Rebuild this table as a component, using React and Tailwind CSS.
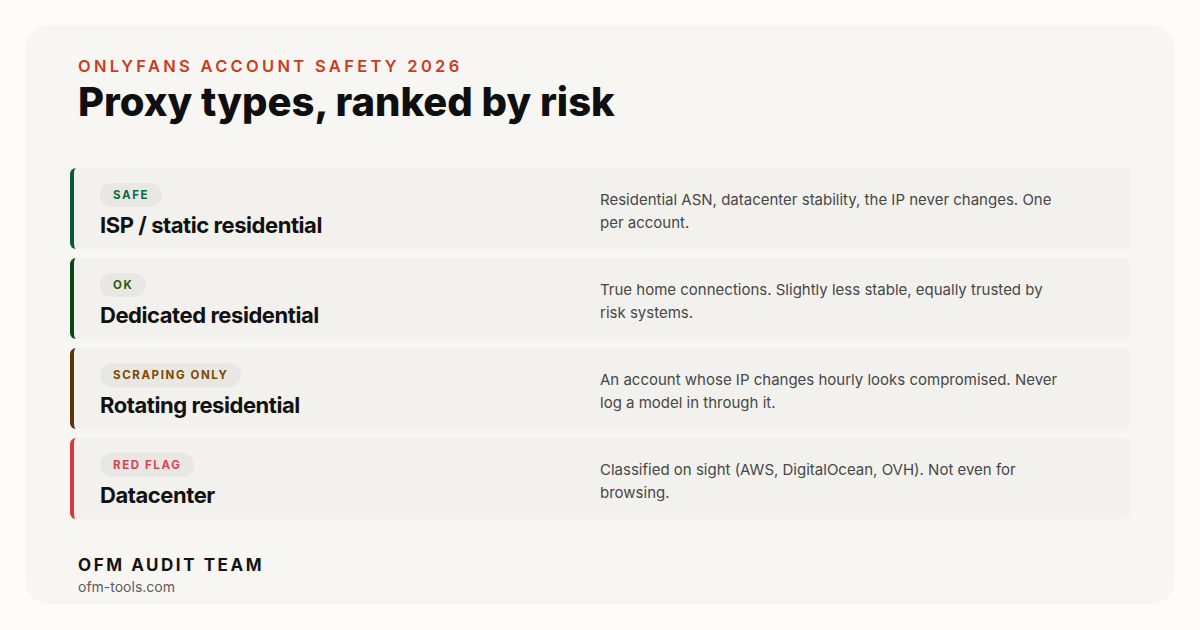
const rows = [
  {
    tag: "SAFE",
    tagColor: "text-[#0b6b42]",
    bar: "border-[#0a5a36]",
    name: "ISP / static residential",
    desc: "Residential ASN, datacenter stability, the IP never changes. One per account.",
  },
  {
    tag: "OK",
    tagColor: "text-[#2f5d0c]",
    bar: "border-[#0e4512]",
    name: "Dedicated residential",
    desc: "True home connections. Slightly less stable, equally trusted by risk systems.",
  },
  {
    tag: "SCRAPING ONLY",
    tagColor: "text-[#7a4a00]",
    bar: "border-[#5f3308]",
    name: "Rotating residential",
    desc: "An account whose IP changes hourly looks compromised. Never log a model in through it.",
  },
  {
    tag: "RED FLAG",
    tagColor: "text-[#d8454f]",
    bar: "border-[#d63843]",
    name: "Datacenter",
    desc: "Classified on sight (AWS, DigitalOcean, OVH). Not even for browsing.",
  },
]

export default function App() {
  return (
    <div
      className="w-[1200px] h-[630px] bg-[#fdfcf9] p-[25px]"
      style={{ fontFamily: "Inter, 'Noto Sans', sans-serif" }}
    >
      <div className="h-[579px] rounded-3xl bg-[#f7f6f3] px-[45px] pt-[29px] overflow-hidden">
        {/* Header */}
        <div className="pl-2">
          <p className="text-[16.5px] leading-[24px] font-semibold tracking-[0.2em] text-[#cc3b1d]">
            ONLYFANS ACCOUNT SAFETY 2026
          </p>
          <h1 className="text-[40px] leading-[48px] font-extrabold tracking-normal text-[#0f0f0f]">
            Proxy types, ranked by risk
          </h1>
        </div>

        {/* Rows */}
        <div className="mt-[42px] flex flex-col gap-[9px]">
          {rows.map((row) => (
            <div
              key={row.tag}
              className={`h-[81px] flex items-center rounded-md border-l-4 ${row.bar} bg-[#f2f1ed] pl-[26px] pr-6`}
            >
              <div className="w-[500px] shrink-0 pt-[3px]">
                <span
                  className={`inline-block h-6 rounded-full bg-[#e8e7e3] px-[13px] text-[11.5px] leading-6 font-bold tracking-[0.14em] ${row.tagColor}`}
                >
                  {row.tag}
                </span>
                <p className="mt-1 text-[22px] leading-[28px] font-bold tracking-[-0.02em] text-[#111]">
                  {row.name}
                </p>
              </div>
              <p className="max-w-[462px] pt-[5px] text-[15px] leading-[23px] text-[#474747]">
                {row.desc}
              </p>
            </div>
          ))}
        </div>

        {/* Footer */}
        <div className="pl-2 mt-[34px]">
          <p className="text-[17px] leading-[24px] font-bold tracking-[0.15em] text-[#141414]">
            OFM AUDIT TEAM
          </p>
          <p className="text-[14px] leading-[20px] text-[#5c5c5c]">ofm-tools.com</p>
        </div>
      </div>
    </div>
  )
}
